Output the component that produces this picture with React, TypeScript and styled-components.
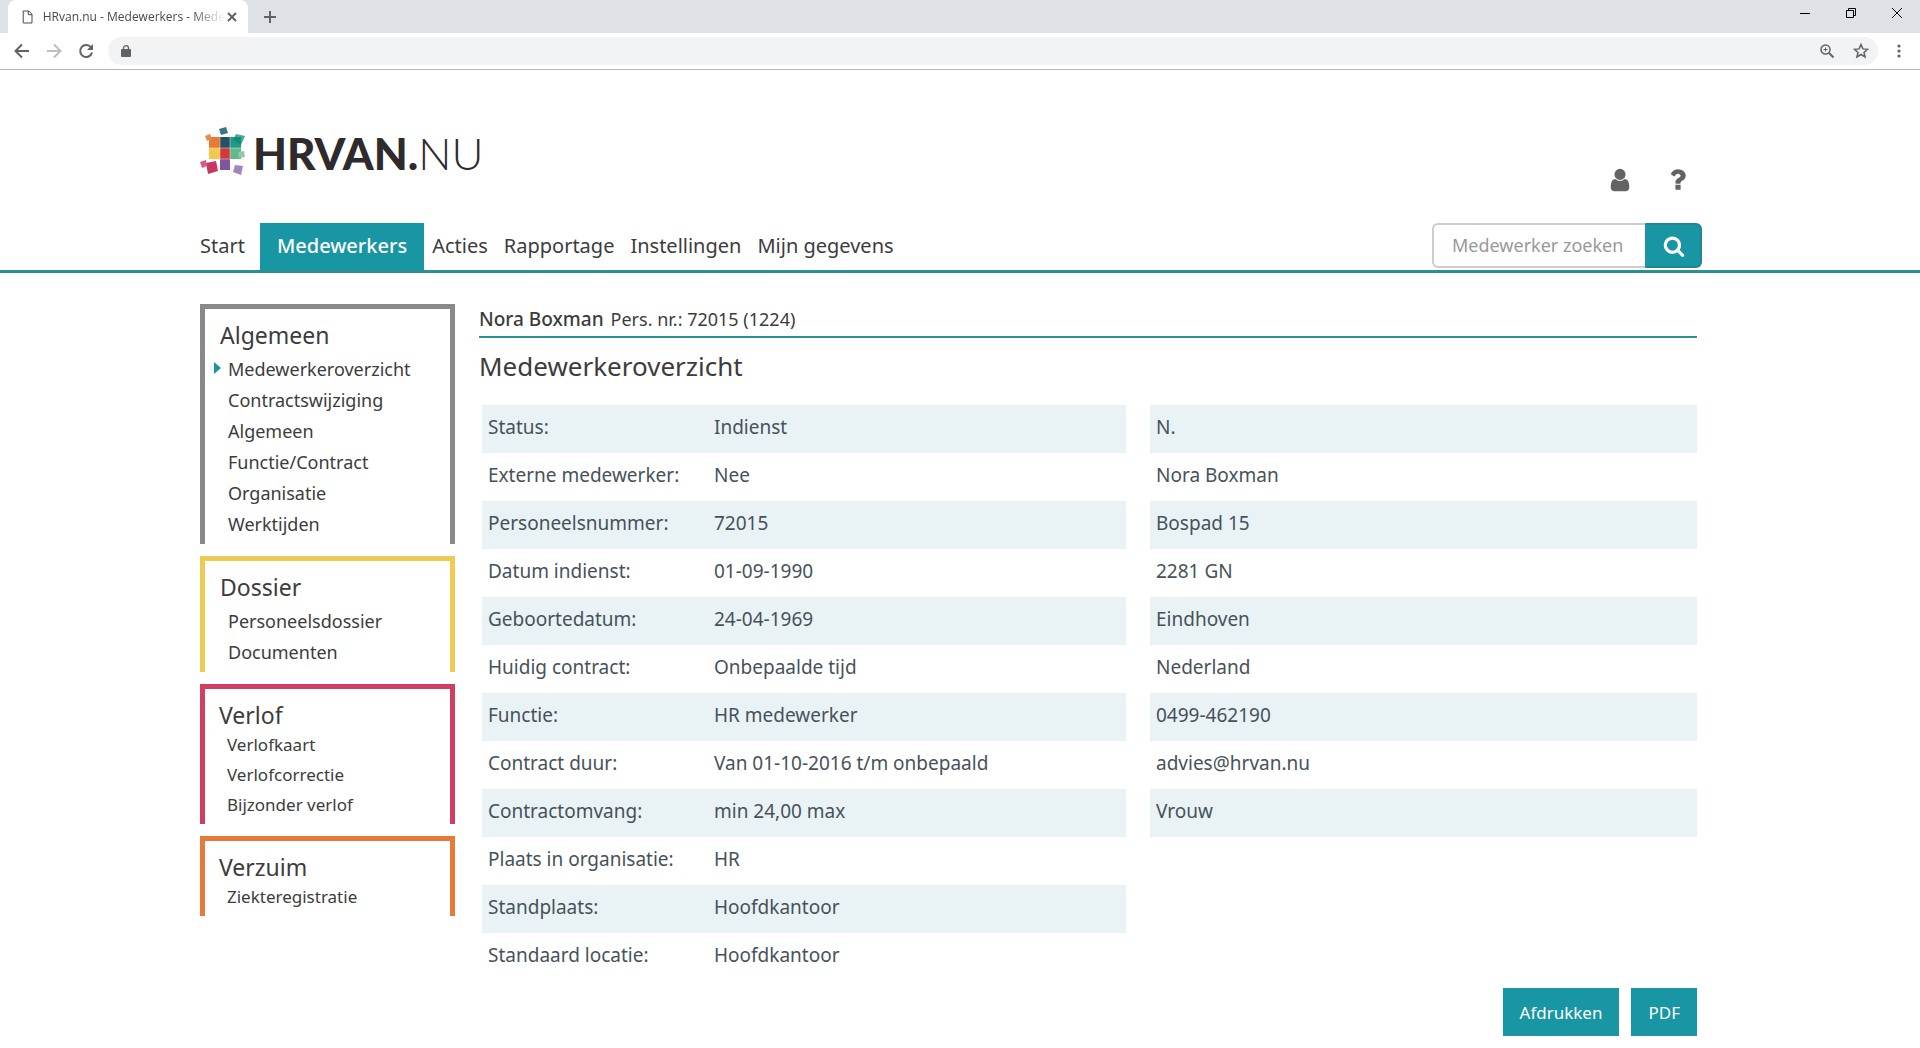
import React from "react";
import styled, { createGlobalStyle } from "styled-components";

const teal = "#1996a3";
const line = "#2b8f93";

const GlobalStyle = createGlobalStyle`
  *, *::before, *::after { box-sizing: border-box; }
  body {
    margin: 0;
    background: #fff;
    color: #3c3c3c;
    font-family: "Noto Sans", "Open Sans", sans-serif;
    font-size: 20px;
  }
  button, input { font: inherit; }
  a { color: inherit; text-decoration: none; }
`;

/* ---------- Browser frame ---------- */

const TabStrip = styled.div`
  display: flex;
  align-items: flex-end;
  height: 33px;
  padding-left: 8px;
  background: #dee1e6;
`;

const BrowserTab = styled.div`
  display: flex;
  align-items: center;
  width: 240px;
  height: 33px;
  padding: 0 10px 0 12px;
  background: #fff;
  border-radius: 8px 8px 0 0;
`;

const TabTitle = styled.span`
  flex: 1;
  margin: 0 2px 0 8px;
  white-space: nowrap;
  color: #45494d;
  font-family: "Open Sans", sans-serif;
  font-size: 12px;
  line-height: 16px;
  mask-image: linear-gradient(to right, #000 82%, transparent);
`;

const PlainButton = styled.button`
  display: flex;
  align-items: center;
  justify-content: center;
  width: ${(p: { $w?: number }) => p.$w ?? 16}px;
  height: 24px;
  padding: 0;
  border: 0;
  background: none;
  color: #5f6368;
`;

const NewTab = styled.div`
  align-self: center;
  margin-left: 14px;
`;

const WindowControls = styled.div`
  display: flex;
  align-self: flex-start;
  margin-left: auto;
  button { color: #000; height: 26px; }
`;

const Toolbar = styled.div`
  display: flex;
  align-items: center;
  height: 37px;
  padding: 0 10px;
  border-bottom: 1px solid #b4b5b7;
  background: #fff;
`;

const AddressBar = styled.div`
  display: flex;
  flex: 1;
  align-items: center;
  height: 28px;
  margin: 0 10px;
  padding: 0 0 0 10px;
  border-radius: 14px;
  background: #f1f3f4;
`;

const AddressInput = styled.input`
  flex: 1;
  height: 24px;
  border: 0;
  outline: 0;
  background: none;
  font-size: 14px;
`;

/* ---------- Site header ---------- */

const Header = styled.header`
  padding: 0 218px 0 200px;
  border-bottom: 3px solid ${line};
`;

const HeaderTop = styled.div`
  display: flex;
  justify-content: space-between;
  height: 153px;
  padding-top: 56px;
`;

const Logo = styled.a`
  display: flex;
  align-items: flex-start;
  gap: 7px;
  color: #2f2a2b;
  font-family: Lato, sans-serif;
  font-size: 44px;
  line-height: 54px;
  svg { margin-top: 1px; }
`;

const LogoWord = styled.span`
  white-space: nowrap;
  b { font-weight: 900; }
  span { font-weight: 300; }
`;

const HeaderIcons = styled.div`
  display: flex;
  gap: 29px;
  padding: 39px 10px 0 0;
  button { width: 29px; height: 29px; color: #636363; }
`;

const NavBar = styled.div`
  display: flex;
  justify-content: space-between;
`;

const Nav = styled.nav`
  display: flex;
  height: 47px;
`;

const NavLink = styled.a<{ $active?: boolean }>`
  padding: 0 ${(p) => (p.$active ? 17 : 8)}px;
  background: ${(p) => (p.$active ? teal : "transparent")};
  color: ${(p) => (p.$active ? "#fff" : "#3c3c3c")};
  font-weight: ${(p) => (p.$active ? 500 : 400)};
  line-height: 45px;
  white-space: nowrap;
  &:first-child { padding: 0 15px 0 0; }
`;

const Search = styled.form`
  display: flex;
  width: 270px;
  height: 45px;
`;

const SearchInput = styled.input`
  flex: 1;
  min-width: 0;
  padding: 0 8px 2px 18px;
  border: 2px solid #ccc;
  border-right: 0;
  border-radius: 6px 0 0 6px;
  outline: 0;
  color: #3c3c3c;
  font-size: 18px;
  &::placeholder { color: #999; opacity: 1; }
`;

const SearchButton = styled.button`
  display: flex;
  align-items: center;
  justify-content: center;
  width: 57px;
  padding: 0;
  border: 2px solid #23858f;
  border-left-color: ${teal};
  border-radius: 0 6px 6px 0;
  background: ${teal};
  color: #fff;
`;

/* ---------- Page body ---------- */

const Page = styled.div`
  display: flex;
  align-items: flex-start;
  gap: 24px;
  padding: 31px 223px 12px 200px;
`;

const Sidebar = styled.aside`
  display: flex;
  flex: none;
  flex-direction: column;
  gap: 12px;
  width: 255px;
`;

const MenuBox = styled.section<{ $color: string; $compact?: boolean }>`
  padding: 11px 15px 4px ${(p) => (p.$compact ? 14 : 15)}px;
  border: 5px solid ${(p) => p.$color};
  border-bottom: 0;
  font-size: ${(p) => (p.$compact ? 17 : 18)}px;
  line-height: ${(p) => (p.$compact ? 30 : 31)}px;
  h2 {
    margin: 0 0 ${(p) => (p.$compact ? 0 : 3)}px;
    font-size: 23px;
    font-weight: 400;
    line-height: inherit;
  }
  ul { margin: 0; padding: 0 0 0 8px; list-style: none; }
`;

const MenuItem = styled.li<{ $active?: boolean }>`
  display: flex;
  align-items: center;
  &::before {
    content: "";
    display: ${(p) => (p.$active ? "block" : "none")};
    margin: 0 7px 4px -14px;
    border: solid transparent;
    border-width: 6px 0 6px 7px;
    border-left-color: ${teal};
  }
`;

const Main = styled.main`
  flex: 1;
  min-width: 0;
`;

const Person = styled.p`
  margin: 0;
  padding-bottom: 2px;
  border-bottom: 2px solid ${line};
  font-size: 18px;
  line-height: 30px;
  b { margin-right: 7px; font-size: 19px; font-weight: 500; }
`;

const Title = styled.h1`
  margin: 8px 0 19px;
  font-size: 26px;
  font-weight: 400;
  line-height: 40px;
`;

const Tables = styled.div`
  display: grid;
  grid-template-columns: 644fr 547fr;
  align-items: start;
  gap: 24px;
  padding-left: 3px;
`;

const DataTable = styled.table`
  width: 100%;
  border-collapse: collapse;
  color: #46525a;
  font-size: 19px;
  line-height: 44px;
  tr:nth-child(odd) { background: #e9f3f6; }
  th, td {
    height: 48px;
    padding: 0 6px 4px;
    font-weight: 400;
    text-align: left;
    white-space: nowrap;
  }
  th { width: 226px; }
`;

const Actions = styled.div`
  display: flex;
  justify-content: flex-end;
  gap: 12px;
  margin-top: 7px;
`;

const ActionButton = styled.button`
  height: 48px;
  padding: 0 17px;
  border: 0;
  background: ${teal};
  color: #fff;
  font-size: 17px;
`;

/* ---------- Icons ---------- */

const AwesomeIcon = ({ size, d }: { size: number; d: string }) => (
  <svg width={size} height={size} viewBox="0 0 1792 1792" fill="currentColor" aria-hidden="true">
    <path d={d} />
  </svg>
);

const userPath =
  "M1536 1399q0 109-62.5 187t-150.5 78h-854q-88 0-150.5-78t-62.5-187q0-85 8.5-160.5t31.5-152 58.5-131 94-89 134.5-34.5q131 128 313 128t313-128q76 0 134.500 34.500t94 89 58.500 131 31.500 152 8.500 160.500zm-256-887q0 159-112.500 271.500t-271.500 112.500-271.500-112.500-112.500-271.500 112.500-271.500 271.500-112.500 271.500 112.500 112.500 271.500z";
const questionPath =
  "M1088 1256v240q0 16-12 28t-28 12h-240q-16 0-28-12t-12-28v-240q0-16 12-28t28-12h240q16 0 28 12t12 28zm316-600q0 54-15.500 101t-35 76.500-55 59.500-57.500 43.500-61 35.500q-41 23-68.500 65t-27.500 67q0 17-12 32.500t-28 15.500h-240q-15 0-25.500-18.500t-10.500-37.500v-45q0-83 65-156.500t143-108.500q59-27 84-56t25-76q0-42-46.500-74t-107.500-32q-65 0-108 29-35 25-107 115-13 16-31 16-12 0-25-8l-164-125q-13-10-15.500-25t5.500-28q160-266 464-266 80 0 161 31t146 83 106 127.500 41 158.500z";
const searchPath =
  "M1216 832q0-185-131.500-316.500t-316.500-131.500-316.500 131.500-131.500 316.500 131.500 316.500 316.500 131.500 316.500-131.500 131.500-316.500zm512 832q0 52-38 90t-90 38q-54 0-90-38l-343-342q-179 124-399 124-143 0-273.500-55.500t-225-150-150-225-55.500-273.500 55.500-273.500 150-225 225-150 273.500-55.500 273.500 55.500 225 150 150 225 55.500 273.500q0 220-124 399l343 343q37 37 37 90z";

const LineIcon = ({
  size = 16,
  width = 2,
  children,
}: {
  size?: number;
  width?: number;
  children: React.ReactNode;
}) => (
  <svg
    width={size}
    height={size}
    viewBox={`0 0 ${size} ${size}`}
    fill="none"
    stroke="currentColor"
    strokeWidth={width}
    aria-hidden="true"
  >
    {children}
  </svg>
);

const LogoMark = () => (
  <svg width="46" height="50" viewBox="0 0 46 50" aria-hidden="true">
    <path fill="#ea7a31" d="M9 10h11v11H9z" />
    <path fill="#265066" d="M20 10h10v11H20z" />
    <path fill="#1f9b86" d="M30 10h11v11H30z" />
    <path fill="#f3c84c" d="M9 21h11v11H9z" />
    <path fill="#d3383b" d="M20 21h10v11H20z" />
    <path fill="#62ba8b" d="M30 21h11v11H30z" />
    <path fill="#7d55a0" d="M20 32h10v11H20z" />
    <path fill="#3d7387" d="M19 2l7-2 2 6-7 2z" />
    <path fill="#e9884e" d="M5 9l5-2 2 5-5 2z" />
    <path fill="#0d8a77" fillOpacity=".75" d="M36 7l9 2-4 9-8-5z" />
    <path fill="#8ccba6" d="M38 25l6-1 1 6-6 1z" />
    <path fill="#c93762" d="M6 36l10-2 2 10-10 3z" />
    <path fill="#dc5980" d="M0 35l6-2 1 6-5 2z" />
    <path fill="#a583bd" d="M35 38l8 1-2 9-8-3z" />
    <path stroke="#fff" strokeOpacity=".4" strokeWidth="1" d="M9 21h32M20 32h10M20 10v22M30 10v22" />
  </svg>
);

/* ---------- Data ---------- */

const navItems = ["Start", "Medewerkers", "Acties", "Rapportage", "Instellingen", "Mijn gegevens"];

const menus = [
  {
    title: "Algemeen",
    color: "#898989",
    items: ["Medewerkeroverzicht", "Contractswijziging", "Algemeen", "Functie/Contract", "Organisatie", "Werktijden"],
  },
  { title: "Dossier", color: "#edcb55", items: ["Personeelsdossier", "Documenten"] },
  { title: "Verlof", color: "#cf4060", compact: true, items: ["Verlofkaart", "Verlofcorrectie", "Bijzonder verlof"] },
  { title: "Verzuim", color: "#e67a3c", compact: true, items: ["Ziekteregistratie"] },
];

const details = [
  ["Status:", "Indienst"],
  ["Externe medewerker:", "Nee"],
  ["Personeelsnummer:", "72015"],
  ["Datum indienst:", "01-09-1990"],
  ["Geboortedatum:", "24-04-1969"],
  ["Huidig contract:", "Onbepaalde tijd"],
  ["Functie:", "HR medewerker"],
  ["Contract duur:", "Van 01-10-2016 t/m onbepaald"],
  ["Contractomvang:", "min 24,00 max"],
  ["Plaats in organisatie:", "HR"],
  ["Standplaats:", "Hoofdkantoor"],
  ["Standaard locatie:", "Hoofdkantoor"],
];

const contact = [
  "N.",
  "Nora Boxman",
  "Bospad 15",
  "2281 GN",
  "Eindhoven",
  "Nederland",
  "0499-462190",
  "advies@hrvan.nu",
  "Vrouw",
];

const BrowserFrame = () => (
  <div>
    <TabStrip>
      <BrowserTab>
        <LineIcon width={1}>
          <path d="M3.500 1.500h6l3.500 3.500v9.500h-9.500zM9 1.500v4h4" />
        </LineIcon>
        <TabTitle>HRvan.nu - Medewerkers - Mede</TabTitle>
        <PlainButton $w={12} aria-label="Tabblad sluiten">
          <LineIcon size={10}>
            <path d="M1 1l8 8M9 1l-8 8" />
          </LineIcon>
        </PlainButton>
      </BrowserTab>
      <NewTab>
        <PlainButton aria-label="Nieuw tabblad">
          <LineIcon size={12}>
            <path d="M6 0v12M0 6h12" />
          </LineIcon>
        </PlainButton>
      </NewTab>
      <WindowControls>
        <PlainButton $w={46} aria-label="Minimaliseren">
          <LineIcon size={10} width={1}>
            <path d="M0 5.500h10" />
          </LineIcon>
        </PlainButton>
        <PlainButton $w={46} aria-label="Verkleinen">
          <LineIcon size={10} width={1}>
            <path d="M.5 2.500h7v7h-7zM2.500 2.500v-2h7v7h-2" />
          </LineIcon>
        </PlainButton>
        <PlainButton $w={46} aria-label="Sluiten">
          <LineIcon size={10} width={1}>
            <path d="M0 0l10 10M10 0L0 10" />
          </LineIcon>
        </PlainButton>
      </WindowControls>
    </TabStrip>
    <Toolbar>
      <PlainButton $w={24} aria-label="Terug">
        <LineIcon>
          <path d="M15 8H2M8 1.500L1.500 8 8 14.500" />
        </LineIcon>
      </PlainButton>
      <PlainButton $w={40} aria-label="Vooruit" disabled>
        <LineIcon>
          <path stroke="#bcbec1" d="M1 8h13M8 1.500L14.500 8 8 14.500" />
        </LineIcon>
      </PlainButton>
      <PlainButton $w={24} aria-label="Vernieuwen">
        <LineIcon>
          <path d="M13 4.500a6 6 0 1 0 1 5" />
          <path fill="currentColor" stroke="none" d="M15 1v6H9z" />
        </LineIcon>
      </PlainButton>
      <AddressBar>
        <PlainButton aria-label="Beveiligde verbinding">
          <svg width="10" height="12" viewBox="0 0 10 12" aria-hidden="true">
            <path fill="currentColor" d="M1 4h8q1 0 1 1v6q0 1-1 1H1q-1 0-1-1V5q0-1 1-1z" />
            <path fill="none" stroke="currentColor" strokeWidth="1.300" d="M2.500 4.500V3a2.500 2.300 0 0 1 5 0v1.500" />
          </svg>
        </PlainButton>
        <AddressInput aria-label="Adresbalk" />
        <PlainButton $w={34} aria-label="Zoom">
          <LineIcon size={14} width={1.5}>
            <circle cx="5.500" cy="5.500" r="4.500" />
            <path d="M9 9l4.500 4.500" strokeWidth="2" />
            <path d="M3.500 5.500h4M5.500 3.500v4" strokeWidth="1" />
          </LineIcon>
        </PlainButton>
        <PlainButton $w={34} aria-label="Bladwijzer">
          <LineIcon width={1.5}>
            <path d="M8 1.500l1.900 4.400 4.600.4-3.500 3.100 1.100 4.600L8 11.500 3.900 14l1.100-4.600L1.500 6.300l4.600-.4z" />
          </LineIcon>
        </PlainButton>
      </AddressBar>
      <PlainButton $w={22} aria-label="Menu">
        <svg width="4" height="14" viewBox="0 0 4 14" fill="currentColor" aria-hidden="true">
          <circle cx="2" cy="2" r="1.600" />
          <circle cx="2" cy="7" r="1.600" />
          <circle cx="2" cy="12" r="1.600" />
        </svg>
      </PlainButton>
    </Toolbar>
  </div>
);

export default function App() {
  return (
    <>
      <GlobalStyle />
      <BrowserFrame />
      <Header>
        <HeaderTop>
          <Logo href="#start" aria-label="HRVAN.NU">
            <LogoMark />
            <LogoWord>
              <b>HRVAN.</b>
              <span>NU</span>
            </LogoWord>
          </Logo>
          <HeaderIcons>
            <PlainButton aria-label="Mijn account">
              <AwesomeIcon size={26} d={userPath} />
            </PlainButton>
            <PlainButton aria-label="Help">
              <AwesomeIcon size={29} d={questionPath} />
            </PlainButton>
          </HeaderIcons>
        </HeaderTop>
        <NavBar>
          <Nav>
            {navItems.map((item) => (
              <NavLink key={item} href={`#${item}`} $active={item === "Medewerkers"}>
                {item}
              </NavLink>
            ))}
          </Nav>
          <Search onSubmit={(e) => e.preventDefault()}>
            <SearchInput type="text" aria-label="Medewerker zoeken" placeholder="Medewerker zoeken" />
            <SearchButton type="submit" aria-label="Zoeken">
              <AwesomeIcon size={22} d={searchPath} />
            </SearchButton>
          </Search>
        </NavBar>
      </Header>
      <Page>
        <Sidebar>
          {menus.map((menu) => (
            <MenuBox key={menu.title} $color={menu.color} $compact={menu.compact}>
              <h2>{menu.title}</h2>
              <ul>
                {menu.items.map((item) => (
                  <MenuItem key={item} $active={item === "Medewerkeroverzicht"}>
                    <a href={`#${item}`}>{item}</a>
                  </MenuItem>
                ))}
              </ul>
            </MenuBox>
          ))}
        </Sidebar>
        <Main>
          <Person>
            <b>Nora Boxman</b>Pers. nr.: 72015 (1224)
          </Person>
          <Title>Medewerkeroverzicht</Title>
          <Tables>
            <DataTable>
              <tbody>
                {details.map(([label, value]) => (
                  <tr key={label}>
                    <th scope="row">{label}</th>
                    <td>{value}</td>
                  </tr>
                ))}
              </tbody>
            </DataTable>
            <DataTable>
              <tbody>
                {contact.map((value) => (
                  <tr key={value}>
                    <td>{value}</td>
                  </tr>
                ))}
              </tbody>
            </DataTable>
          </Tables>
          <Actions>
            <ActionButton type="button">Afdrukken</ActionButton>
            <ActionButton type="button">PDF</ActionButton>
          </Actions>
        </Main>
      </Page>
    </>
  );
}
